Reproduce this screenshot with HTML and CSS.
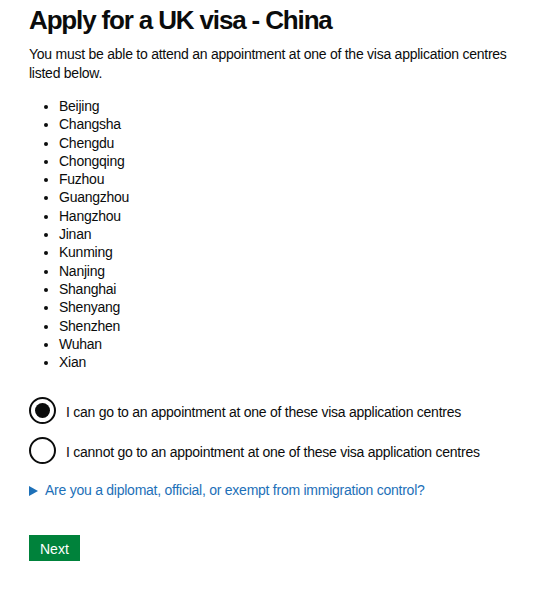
FILE: index.html
```html
<!DOCTYPE html>
<html lang="en">
  <head>
    <meta charset="UTF-8" />
    <meta name="viewport" content="width=device-width, initial-scale=1.0" />
    <title>Apply for a UK visa - China</title>
    <link rel="stylesheet" href="styles.css">
  </head>
  <body>
    <main class="page">
      <h1 class="heading">Apply for a UK visa - China</h1>
      <p class="lead">You must be able to attend an appointment at one of the visa application centres listed below.</p>

      <ul class="centres">
        <li>Beijing</li>
        <li>Changsha</li>
        <li>Chengdu</li>
        <li>Chongqing</li>
        <li>Fuzhou</li>
        <li>Guangzhou</li>
        <li>Hangzhou</li>
        <li>Jinan</li>
        <li>Kunming</li>
        <li>Nanjing</li>
        <li>Shanghai</li>
        <li>Shenyang</li>
        <li>Shenzhen</li>
        <li>Wuhan</li>
        <li>Xian</li>
      </ul>

      <div class="radios">
        <label class="radio-item">
          <input type="radio" name="centre" value="yes" checked>
          <span class="radio-mark"></span>
          <span class="radio-label">I can go to an appointment at one of these visa application centres</span>
        </label>
        <label class="radio-item">
          <input type="radio" name="centre" value="no">
          <span class="radio-mark"></span>
          <span class="radio-label">I cannot go to an appointment at one of these visa application centres</span>
        </label>
      </div>

      <details class="extra">
        <summary><span class="arrow"></span>Are you a diplomat, official, or exempt from immigration control?</summary>
      </details>

      <button class="next-btn" type="submit">Next</button>
    </main>
  </body>
</html>
```

FILE: styles.css
```css
body {
  margin: 0;
  font-family: "Liberation Sans", Arial, sans-serif;
  color: #0b0c0c;
  background: #ffffff;
  letter-spacing: -0.25px;
}
.page {
  padding: 0 29px;
}
.heading {
  font-size: 26px;
  line-height: 30px;
  font-weight: bold;
  letter-spacing: -1.15px;
  margin: 5px 0 10px;
}
.lead {
  font-size: 14px;
  line-height: 18.5px;
  margin: 0 0 15px;
}
.centres {
  font-size: 14px;
  line-height: 18.3px;
  margin: 0 0 26px;
  padding-left: 30px;
}
.radios {
  display: flex;
  flex-direction: column;
  gap: 13px;
}
.radio-item {
  display: flex;
  align-items: center;
  gap: 10px;
  font-size: 14px;
  line-height: 18.5px;
  cursor: pointer;
}
.radio-item input {
  display: none;
}
.radio-label {
  padding-top: 3px;
}
.radio-mark {
  width: 23px;
  height: 23px;
  border: 2px solid #0b0c0c;
  border-radius: 50%;
  display: flex;
  align-items: center;
  justify-content: center;
  flex-shrink: 0;
}
.radio-item input:checked + .radio-mark::after {
  content: "";
  width: 15px;
  height: 15px;
  border-radius: 50%;
  background: #0b0c0c;
}
.extra {
  margin-top: 17px;
  font-size: 14px;
  line-height: 18.5px;
  color: #1d70b8;
}
.extra summary {
  list-style: none;
  display: flex;
  align-items: center;
  gap: 7px;
  cursor: pointer;
}
.extra summary::-webkit-details-marker {
  display: none;
}
.arrow {
  width: 0;
  height: 0;
  border-top: 5px solid transparent;
  border-bottom: 5px solid transparent;
  border-left: 9px solid #1d70b8;
}
.next-btn {
  margin-top: 35px;
  font-family: inherit;
  font-size: 14px;
  line-height: 18.5px;
  letter-spacing: 0;
  color: #ffffff;
  background: #00823b;
  border: none;
  border-radius: 0;
  padding: 5px 11px 2.5px;
  box-shadow: 0 2px 0 #003618;
  cursor: pointer;
}
```
